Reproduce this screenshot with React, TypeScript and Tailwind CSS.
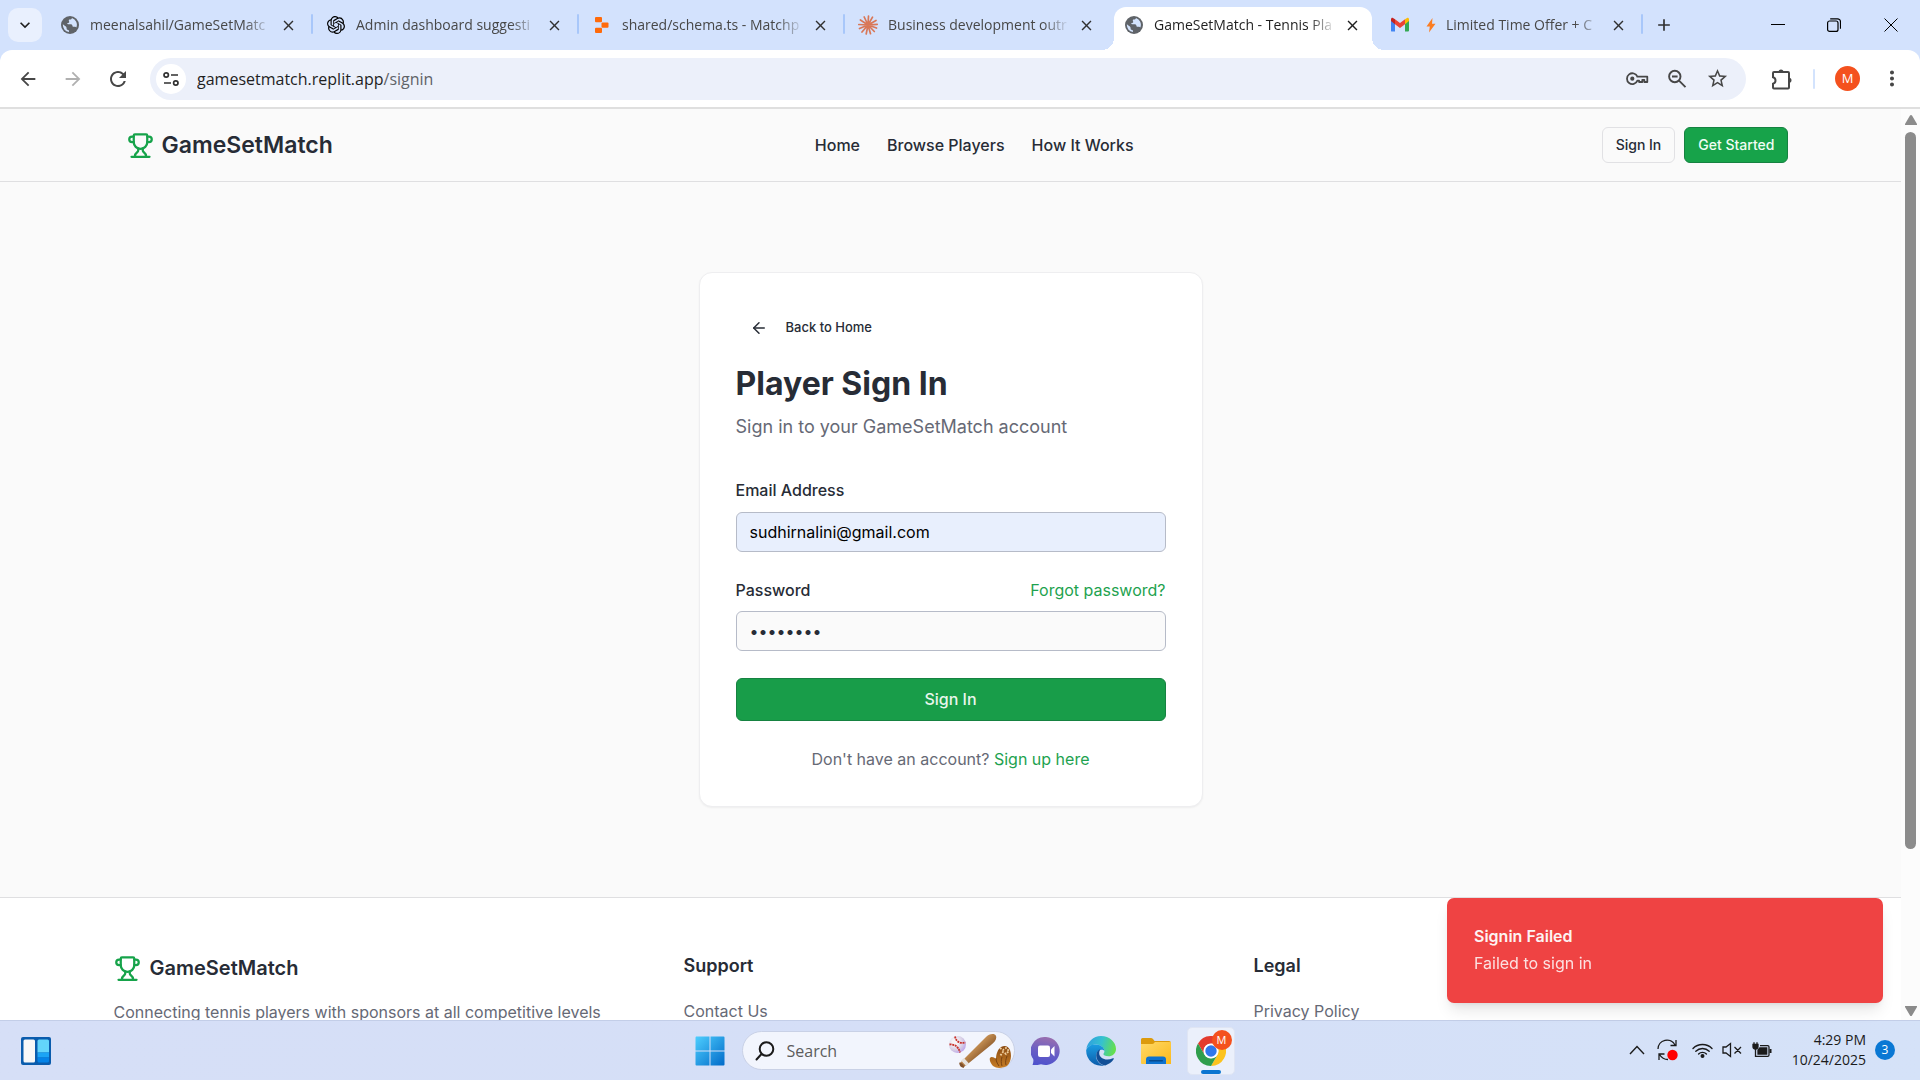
import { useState, type ReactNode } from "react";
import { ArrowLeft, Trophy } from "lucide-react";
import { SiOpenai } from "react-icons/si";
import {
  MdArrowBack,
  MdArrowForward,
  MdClose,
  MdAdd,
  MdMoreVert,
  MdRefresh,
  MdStarOutline,
  MdKeyboardArrowDown,
} from "react-icons/md";

function GlobeIcon() {
  return (
    <svg viewBox="0 0 20 20" className="size-[18px]" aria-hidden="true">
      <circle cx="10" cy="10" r="10" fill="#5f6368" />
      <path
        d="M12.2 2.2c-.3 1.500-1.200 1.700-2.500 1.800-1.400.1-1.100 1.300-.7 2.100.5 1-.6 1.500-1.600 1.800-.9.3-.4 1.400.6 1.400h3.100c1.400 0 1.500 1.200 1.700 2 .3.900 1.500.7 2.300.6.900 0 1.700.2 2 .8A8 8 0 0 0 12.200 2.200zM2.100 9.200a8 8 0 0 0 6.700 8.700c.2-1.100.3-2.200-.8-2.400-1.500-.2-1.800-1-1.800-2.300 0-1.200-.9-1.400-1.700-2z"
        fill="#d3e3fd"
      />
    </svg>
  );
}

function ReplitIcon() {
  return (
    <svg viewBox="0 0 20 20" className="size-5" fill="#ff6a0a" aria-hidden="true">
      <rect x="3" y="2" width="7" height="5.300" rx="1" />
      <rect x="9.500" y="7.400" width="7" height="5.300" rx="1" />
      <rect x="3" y="12.800" width="7" height="5.300" rx="1" />
    </svg>
  );
}

function ClaudeIcon() {
  return (
    <svg viewBox="-10 -10 20 20" className="size-5" stroke="#d97757" strokeWidth="1.700" strokeLinecap="round" aria-hidden="true">
      <path d="M0 0 0.500-9M0 0 4.500-7.800M0 0 8-4.500M0 0 9.200-.6M0 0 8.500 3M0 0 6.300 6.500M0 0 2.500 8.700M0 0-1.800 9M0 0-6 7M0 0-8.500 3.500M0 0-9.200-.5M0 0-7.600-5M0 0-3.800-8" />
    </svg>
  );
}

function GmailIcon() {
  return (
    <svg viewBox="0 0 20 16" className="h-4 w-5" aria-hidden="true">
      <path d="M1 14V3l4 3v8.500H2A1 1 0 0 1 1 14z" fill="#4285f4" />
      <path d="M15 6l4-3v10.500a1 1 0 0 1-1 1h-3z" fill="#34a853" />
      <path d="M15 2.300 17 1c1-.6 2 .2 2 1.300V4l-4 3.200z" fill="#fbbc04" />
      <path d="M5 7.200v-5l5 3.900 5-3.900v5l-5 3.900z" fill="#ea4335" />
      <path d="M1 4V2.300C1 1.200 2 .4 3 1l2 1.300v4.900z" fill="#c5221f" />
    </svg>
  );
}

type Tab = { id: string; title: ReactNode; label: string; icon: ReactNode; active?: boolean };

const tabs: Tab[] = [
  { id: "a", label: "meenalsahil/GameSetMatch", title: "meenalsahil/GameSetMatc", icon: <GlobeIcon /> },
  { id: "b", label: "Admin dashboard suggestions", title: "Admin dashboard suggesti", icon: <SiOpenai className="size-[18px] text-black" /> },
  { id: "c", label: "shared/schema.ts", title: "shared/schema.ts - Matchp", icon: <ReplitIcon /> },
  { id: "d", label: "Business development outreach", title: "Business development outr", icon: <ClaudeIcon /> },
  { id: "e", label: "GameSetMatch", title: "GameSetMatch - Tennis Pla", icon: <GlobeIcon />, active: true },
  {
    id: "f",
    label: "Limited Time Offer",
    title: (
      <span className="flex items-center gap-[10px] pl-[6px]">
        <svg viewBox="0 0 10 16" className="h-4 w-[10px] shrink-0" aria-hidden="true">
          <path d="M6.500 1 .5 9.500h3.300L3 15.500l6.500-8.800H6z" fill="#fb7d23" />
        </svg>
        Limited Time Offer + C
      </span>
    ),
    icon: <GmailIcon />,
  },
];

function BrowserTab({ tab, divider }: { tab: Tab; divider: boolean }) {
  return (
    <div
      className={
        tab.active
          ? "relative mt-[7px] mr-2 flex h-[43px] w-[258px] min-w-0 items-center rounded-t-[12px] bg-white pb-[7px] text-[#1f1f1f] before:absolute before:bottom-0 before:-left-3 before:size-3 before:bg-[radial-gradient(circle_at_0_0,transparent_12px,white_12px)] after:absolute after:-right-3 after:bottom-0 after:size-3 after:bg-[radial-gradient(circle_at_100%_0,transparent_12px,white_12px)]"
          : "relative flex h-[50px] w-[266px] min-w-0 items-center text-[#474747]"
      }
    >
      <span className="flex w-10 shrink-0 justify-center">{tab.icon}</span>
      <span className="min-w-0 flex-1 mask-r-from-85% text-sm whitespace-nowrap">{tab.title}</span>
      <button
        type="button"
        aria-label={"Close " + tab.label}
        className={tab.active ? "mr-2 ml-1 flex size-6 shrink-0 items-center justify-center text-[#1f1f1f]" : "mr-4 ml-1 flex size-6 shrink-0 items-center justify-center text-[#303030]"}
      >
        <MdClose className="size-[17px]" />
      </button>
      {divider && <span className="absolute top-[14px] right-[3px] h-5 w-[2px] rounded-full bg-[#a8c7fa]" />}
    </div>
  );
}

function KeyIcon() {
  return (
    <svg viewBox="0 0 24 24" className="size-6" fill="none" stroke="currentColor" strokeWidth="1.800" aria-hidden="true">
      <path d="M12.300 9.700h10v5.300h-3v-2.200h-2V15h-3.200v-1.300h-1.700a5.400 5.400 0 1 1 0-4z" strokeLinejoin="round" />
      <circle cx="7.300" cy="11.700" r="2.100" fill="currentColor" stroke="none" />
    </svg>
  );
}

function ZoomIcon() {
  return (
    <svg viewBox="0 0 24 24" className="size-6" fill="none" stroke="currentColor" strokeWidth="1.900" aria-hidden="true">
      <circle cx="9.800" cy="9.500" r="5.700" />
      <path d="m14 13.700 6.500 6.500M7 9.500h5.600" />
    </svg>
  );
}

function ExtensionIcon() {
  return (
    <svg viewBox="0 0 24 24" className="size-6" aria-hidden="true">
      <path
        d="M5 5h14a1 1 0 0 1 1 1v14.500a1 1 0 0 1-1 1H5a1 1 0 0 1-1-1v-3.800a3.300 3.300 0 0 0 0-6.400V6a1 1 0 0 1 1-1z"
        fill="none"
        stroke="currentColor"
        strokeWidth="2"
      />
      <path d="M9.500 5a2.500 2.500 0 0 1 5 0zM20 10.800a2.500 2.500 0 0 1 0 5z" fill="currentColor" />
    </svg>
  );
}

function BrowserChrome() {
  return (
    <div className="font-['Open_Sans',sans-serif]">
      <div className="flex h-[50px] items-center bg-[#d3e2fd]">
        <button type="button" aria-label="Search tabs" className="ml-2 flex h-[34px] w-[34px] shrink-0 items-center justify-center rounded-[10px] bg-[#e9f0fe]">
          <MdKeyboardArrowDown className="size-5 text-[#1f1f1f]" />
        </button>
        <div className="ml-2 flex min-w-0 items-center">
          {tabs.map((t, i) => (
            <BrowserTab key={t.id} tab={t} divider={i !== 3 && i !== 4} />
          ))}
        </div>
        <button type="button" aria-label="New tab" className="ml-[2px] flex size-8 shrink-0 items-center justify-center text-[#303030]">
          <MdAdd className="size-5" />
        </button>
        <div className="ml-auto flex h-full shrink-0 items-center text-black">
          <button type="button" aria-label="Minimize" className="flex h-full w-14 items-center justify-center">
            <svg viewBox="0 0 14 14" className="size-[14px]" stroke="currentColor" aria-hidden="true"><path d="M0 6.500h14" /></svg>
          </button>
          <button type="button" aria-label="Restore" className="flex h-full w-14 items-center justify-center">
            <svg viewBox="0 0 14 14" className="size-[14px]" fill="none" stroke="currentColor" strokeWidth="1.200" aria-hidden="true">
              <rect x=".6" y="3" width="10.400" height="10.400" rx="2" />
              <path d="M3.200.8h7.300a3 3 0 0 1 3 3v7" />
            </svg>
          </button>
          <button type="button" aria-label="Close" className="flex h-full w-[58px] items-center justify-center">
            <svg viewBox="0 0 14 14" className="size-[14px]" stroke="currentColor" aria-hidden="true"><path d="m.5.5 13 13M13.500.5l-13 13" /></svg>
          </button>
        </div>
      </div>
      <div className="bg-[#d3e2fd]">
        <div className="flex h-[57px] items-center rounded-t-[12px] bg-white text-[#474747]">
          <div className="ml-[5px] flex shrink-0">
            <button type="button" aria-label="Back" className="flex h-10 w-[45px] items-center justify-center"><MdArrowBack className="size-[22px]" /></button>
            <button type="button" aria-label="Forward" className="flex h-10 w-[45px] items-center justify-center text-[#b0b0b0]"><MdArrowForward className="size-[22px]" /></button>
            <button type="button" aria-label="Reload" className="flex h-10 w-[45px] items-center justify-center"><MdRefresh className="size-[24px]" /></button>
          </div>
          <div className="ml-[10px] flex h-[42px] min-w-0 flex-1 items-center rounded-full bg-[#ecf0fa] pl-[6px]">
            <button type="button" aria-label="Site information" className="flex size-[30px] shrink-0 items-center justify-center rounded-full bg-white">
              <svg viewBox="0 0 16 16" className="size-4" fill="none" stroke="#303030" strokeWidth="1.700" aria-hidden="true">
                <circle cx="3.200" cy="4" r="2.200" />
                <path d="M8 4h7M1 12h7" />
                <circle cx="12.800" cy="12" r="2.200" />
              </svg>
            </button>
            <a href="#signin" className="ml-[11px] flex-1 truncate text-base text-[#1f1f1f]">
              gamesetmatch.replit.app<span className="text-[#5f6368]">/signin</span>
            </a>
            <div className="flex shrink-0 pr-[9px]">
              <button type="button" aria-label="Manage passwords" className="flex w-10 items-center justify-center"><KeyIcon /></button>
              <button type="button" aria-label="Zoom" className="flex w-10 items-center justify-center"><ZoomIcon /></button>
              <button type="button" aria-label="Bookmark this tab" className="flex w-10 items-center justify-center"><MdStarOutline className="size-[23px]" /></button>
            </div>
          </div>
          <button type="button" aria-label="Extensions" className="ml-[15px] flex size-10 shrink-0 items-center justify-center"><ExtensionIcon /></button>
          <span className="ml-3 h-5 w-[2px] shrink-0 rounded-full bg-[#d3e3fd]" />
          <button type="button" aria-label="Profile" className="ml-5 flex size-[25px] shrink-0 items-center justify-center rounded-full bg-[#f4511e] text-[13px] text-white">M</button>
          <button type="button" aria-label="Browser menu" className="mr-4 ml-5 flex w-[24px] shrink-0 items-center justify-center"><MdMoreVert className="size-[25px]" /></button>
        </div>
      </div>
    </div>
  );
}

function SiteHeader() {
  return (
    <header className="border-b border-[#dfdfe1]">
      <div className="mx-auto flex h-[72px] max-w-[1728px] items-center justify-between px-[26px]">
        <a href="#home" className="flex items-center gap-2 px-[14px]">
          <Trophy className="size-[27px] text-[#16a34a]" />
          <span className="text-[23px] leading-8 font-semibold">GameSetMatch</span>
        </a>
        <nav className="flex gap-[27px] text-base font-medium">
          <a href="#home">Home</a>
          <a href="#players">Browse Players</a>
          <a href="#how">How It Works</a>
        </nav>
        <div className="flex gap-[9px] text-sm font-medium">
          <button type="button" className="h-9 rounded-md border border-[#e1e1e4] px-[13px]">Sign In</button>
          <button type="button" className="h-9 rounded-md border border-[#168241] bg-[#17a34a] px-[13px] text-[#f0fdf4]">Get Started</button>
        </div>
      </div>
    </header>
  );
}

function SignInCard() {
  const [email, setEmail] = useState("sudhirnalini@gmail.com");
  const [password, setPassword] = useState("password");
  return (
    <form onSubmit={(e) => e.preventDefault()} className="w-full max-w-[504px] rounded-[13px] border border-[#eeeef0] bg-white px-9 pt-[37px] pb-[35px] shadow-xs">
      <button type="button" className="flex h-9 items-center gap-[18px] px-[14px] text-[13px] font-medium">
        <ArrowLeft className="size-[18px]" />
        Back to Home
      </button>
      <h1 className="mt-[18px] text-[32px] leading-10 font-bold">Player Sign In</h1>
      <p className="mt-[9px] text-lg leading-7 text-[#666975]">Sign in to your GameSetMatch account</p>
      <div className="mt-[38px]">
        <label htmlFor="email" className="block text-base leading-[22px] font-medium">Email Address</label>
        <input id="email" type="email" value={email} onChange={(e) => setEmail(e.target.value)} className="mt-[11px] h-10 w-full rounded-md border border-[#b6bbc8] bg-[#e8effd] px-[13px] text-base text-black" />
      </div>
      <div className="mt-[27px]">
        <div className="flex items-center justify-between text-base leading-[22px]">
          <label htmlFor="password" className="font-medium">Password</label>
          <a href="#forgot" className="text-[#1ea24f]">Forgot password?</a>
        </div>
        <input id="password" type="password" value={password} onChange={(e) => setPassword(e.target.value)} className="mt-[10px] h-10 w-full rounded-md border border-[#b6bbc8] bg-[#fafafa] px-[13px] text-base" />
      </div>
      <button type="submit" className="mt-[27px] h-[43px] w-full rounded-md border border-[#168241] bg-[#189d49] pb-[2px] text-base font-medium text-[#e8f6ec]">Sign In</button>
      <p className="mt-[26px] text-center text-base leading-6 text-[#666975]">
        Don't have an account? <a href="#signup" className="text-[#1ea24f]">Sign up here</a>
      </p>
    </form>
  );
}

function SiteFooter() {
  return (
    <footer className="border-t border-[#dfdfe1] bg-white">
      <div className="mx-auto grid max-w-[1728px] grid-cols-3 gap-9 px-[27px] py-[54px]">
        <div>
          <div className="flex items-center gap-[9px]">
            <Trophy className="size-[27px] text-[#16a34a]" />
            <span className="text-xl leading-8 font-semibold">GameSetMatch</span>
          </div>
          <p className="mt-4 text-base text-[#666975]">Connecting tennis players with sponsors at all competitive levels</p>
        </div>
        <div>
          <h2 className="text-lg leading-7 font-semibold">Support</h2>
          <a href="#contact" className="mt-[19px] block text-base text-[#666975]">Contact Us</a>
        </div>
        <div>
          <h2 className="text-lg leading-7 font-semibold">Legal</h2>
          <a href="#privacy" className="mt-[19px] block text-base text-[#666975]">Privacy Policy</a>
        </div>
      </div>
    </footer>
  );
}

function Scrollbar() {
  return (
    <div className="flex w-[19px] shrink-0 flex-col items-center bg-[#fcfcfc] pt-[6px] pb-1" aria-hidden="true">
      <svg viewBox="0 0 12 10" className="h-[10px] w-3" fill="#8b8b8b"><path d="M6 0c.5 0 .8.200 1 .6L12 9c.2.600-.1 1-.7 1H.7C.1 10-.2 9.600 0 9L5 .6C5.200.2 5.500 0 6 0z" /></svg>
      <div className="mt-[7px] mb-[157px] w-[11px] flex-1 rounded-full bg-[#8b8b8b]" />
      <svg viewBox="0 0 12 10" className="h-[10px] w-3 rotate-180" fill="#8b8b8b"><path d="M6 0c.5 0 .8.200 1 .6L12 9c.2.600-.1 1-.7 1H.7C.1 10-.2 9.600 0 9L5 .6C5.200.2 5.500 0 6 0z" /></svg>
    </div>
  );
}

function Baseball() {
  return (
    <svg viewBox="0 0 64 34" className="h-[34px] w-16 shrink-0" aria-hidden="true">
      <defs>
        <linearGradient id="bat" x1="0" y1="0" x2="1" y2="1">
          <stop offset=".35" stopColor="#d09a5b" />
          <stop offset=".65" stopColor="#8d5a2b" />
        </linearGradient>
        <radialGradient id="ball" cx=".35" cy=".35" r=".8">
          <stop offset=".2" stopColor="#f6f3f6" />
          <stop offset=".6" stopColor="#d5cce4" />
          <stop offset="1" stopColor="#b192ee" />
        </radialGradient>
        <linearGradient id="glove" x1="0" y1="0" x2="0" y2="1">
          <stop offset="0" stopColor="#8a4a12" />
          <stop offset="1" stopColor="#c67d26" />
        </linearGradient>
      </defs>
      <circle cx="9.500" cy="10.500" r="8.500" fill="url(#ball)" />
      <path d="M7 2.500c1 5 5 7.500 10.500 6M1.500 10.500c5-.5 9 2 10.500 8" stroke="#c8322b" strokeWidth="1.800" strokeDasharray="2 .7" fill="none" />
      <path d="M12 29 38 3c3-3.500 9-4 10-1s-1 6-5 9L16 33c-2 1-5-2-4-4z" fill="url(#bat)" />
      <path d="m16 24 5 5.500-3 2.500-5-5.500z" fill="#e7e2dc" />
      <path d="M11.500 28.500c2 0 4.500 2.500 4.500 5-2 1-5.500-2-4.500-5z" fill="#80502a" />
      <path d="M42 24c1-2 4-1 6 1 0-5 2-10 5-12 4-2 7-1 9 3 2 6 1 12-3 16-4 2-10 3-14 0-2-2-4-6-3-8z" fill="url(#glove)" />
      <path d="m52 14 3 2 3-2 3 3-3 3-3-2-3 4" fill="none" stroke="#f0d0a0" strokeWidth="1.800" strokeDasharray="1.800 1.300" />
      <path d="M48 24c0 3 1 5 3 8M54 23c-1 3-1 6 0 9M59 22c-1 3-2 6-1 9" stroke="#7a4312" fill="none" />
    </svg>
  );
}

function StartIcon() {
  return (
    <svg viewBox="0 0 30 30" className="size-[30px]" aria-hidden="true">
      <defs>
        <linearGradient id="win" gradientUnits="userSpaceOnUse" x1="0" y1="0" x2="30" y2="30">
          <stop offset="0" stopColor="#4fd0ff" />
          <stop offset="1" stopColor="#0069c8" />
        </linearGradient>
      </defs>
      <path d="M1 .5h13.500v14H.5V1.500zM15.500.5h13q1 0 1 1v13h-14zM.5 15.500h14v14h-13q-1 0-1-1zM15.500 15.500h14v13q0 1-1 1h-13z" fill="url(#win)" />
    </svg>
  );
}

function ChatIcon() {
  return (
    <svg viewBox="0 0 30 30" className="size-[30px]" aria-hidden="true">
      <defs>
        <linearGradient id="chat" x1=".6" y1="0" x2=".4" y2="1">
          <stop offset="0" stopColor="#9b6fae" />
          <stop offset=".5" stopColor="#6b5fc4" />
          <stop offset="1" stopColor="#4f52cc" />
        </linearGradient>
      </defs>
      <path d="M15 1a14 14 0 1 1-5 27.200c-3 .8-6 1-8.500.8.8-2 1.200-4 .7-6A14 14 0 0 1 15 1z" fill="url(#chat)" />
      <rect x="7" y="9.500" width="12" height="11.500" rx="2" fill="#fff" />
      <path d="M20 13.500 23.500 10v10.500L20 17z" fill="#fff" />
    </svg>
  );
}

function EdgeIcon() {
  return (
    <svg viewBox="0 0 30 30" className="size-[30px]" aria-hidden="true">
      <defs>
        <linearGradient id="edgeTop" x1="0" y1=".3" x2="1" y2=".5">
          <stop offset="0" stopColor="#2f9fe0" />
          <stop offset=".5" stopColor="#35c1d0" />
          <stop offset="1" stopColor="#66e04a" />
        </linearGradient>
        <linearGradient id="edgeLeft" x1="0" y1="0" x2="0" y2="1">
          <stop offset="0" stopColor="#1b9de2" />
          <stop offset="1" stopColor="#0c5cab" />
        </linearGradient>
      </defs>
      <path d="M.3 13.500C1.200 6 7.300 0 15 0c8.500 0 15 6.200 15 13 0 4.500-3.500 7.300-7.500 7.300-3.300 0-5.300-1.200-5.100-2.300.2-.7 1-1.200 1-3C18.400 11.500 14.500 8.500 10 8.500S1 11 .3 13.500z" fill="url(#edgeTop)" />
      <path d="M.2 14C1.500 10.500 5 8.500 9.500 8.500c5 0 9 3 8.900 6.500C17 12.800 11 13.500 10.200 19c-.5 4.500 2.500 9.500 8.300 10.400A15 15 0 0 1 .2 14z" fill="url(#edgeLeft)" />
      <path d="M14.500 13.200c-2.500.8-4.300 3-4.300 6 0 5.300 4.300 9.800 9 10.200 3.600-.9 6.700-3.200 8.600-6.300.3-.7-.3-1.100-.9-.8-6.500 3-13.700.4-13.700-5.300 0-1.500.5-2.800 1.300-3.800z" fill="#124f97" />
    </svg>
  );
}

function FolderIcon() {
  return (
    <svg viewBox="0 0 30 30" className="size-[30px]" aria-hidden="true">
      <defs>
        <linearGradient id="folder" x1="0" y1="0" x2="1" y2="1">
          <stop offset="0" stopColor="#ffd968" />
          <stop offset="1" stopColor="#fbb91b" />
        </linearGradient>
      </defs>
      <path d="M0 3.500Q0 2 1.500 2h8.500q1 0 2 1l1.500 2H28q2 0 2 2v5H0z" fill="#dc9a0c" />
      <path d="M0 8h11q1.500 0 2.500-1.500L14 6h16v22H1q-1 0-1-1z" fill="url(#folder)" />
      <path d="M5 28v-4.500Q5 20.500 8 20.500h14q3 0 3 3V28z" fill="#0d72cf" />
      <rect x="8" y="24" width="14" height="1.500" rx=".7" fill="#064b8e" />
    </svg>
  );
}

function ChromeIcon() {
  return (
    <svg viewBox="0 0 30 30" className="size-[30px]" aria-hidden="true">
      <path d="M2 7.500A15 15 0 0 1 28 7.500H15a7.500 7.500 0 0 0-6.500 11.200z" fill="#e33b2e" />
      <path d="M28 7.500A15 15 0 0 1 15 30l6.500-11.200A7.500 7.500 0 0 0 15 7.500z" fill="#fcc31e" />
      <path d="M2 7.500 8.500 18.700A7.500 7.500 0 0 0 21.500 18.700L15 30A15 15 0 0 1 2 7.500z" fill="#2f9e4c" />
      <circle cx="15" cy="15" r="7.300" fill="#fff" />
      <circle cx="15" cy="15" r="5.700" fill="#2f77ea" />
    </svg>
  );
}

function Taskbar() {
  return (
    <div className="grid h-[60px] shrink-0 grid-cols-[1fr_auto_1fr] items-center border-t border-[#c3cee8] bg-linear-to-r from-[#d6dff7] via-[#d5dff7] to-[#d5e2f8] font-['Open_Sans',sans-serif]">
      <button type="button" aria-label="Widgets" className="ml-[21px] w-[30px]">
        <svg viewBox="0 0 30 28" className="h-7 w-[30px]" aria-hidden="true">
          <rect width="30" height="28" rx="2" fill="#0a5cad" />
          <rect x="2.500" y="2.500" width="11.500" height="23" rx="1.500" fill="#f7f7f7" />
          <path d="M16.500 4q0-1.500 1.500-1.500h8.500q1.500 0 1.500 1.500v11.500H16.500z" fill="#63d5fb" />
          <path d="M16.500 15.500H28v5H16.500z" fill="#1ba4f5" />
          <path d="M16.500 20.500H28V24q0 1.500-1.500 1.500H18q-1.500 0-1.500-1.500z" fill="#0483e8" />
        </svg>
      </button>
      <div className="flex items-center pl-[9px]">
        <button type="button" aria-label="Start"><StartIcon /></button>
        <label className="ml-[17px] flex h-[39px] w-[273px] items-center rounded-full border border-[#c9d1e6] bg-[#f2f5fd] pr-[2px] pl-3">
          <svg viewBox="0 0 20 20" className="size-5 shrink-0" fill="none" stroke="#1b1b1b" strokeWidth="2" strokeLinecap="round" aria-hidden="true">
            <circle cx="11.500" cy="8" r="6.800" />
            <path d="M6.500 13 1.500 18.500" />
          </svg>
          <input type="text" aria-label="Search" placeholder="Search" className="ml-3 w-0 flex-1 text-base text-[#5c5c5c] placeholder:text-[#5c5c5c]" />
          <Baseball />
        </label>
        <button type="button" aria-label="Chat" className="ml-[16px]"><ChatIcon /></button>
        <button type="button" aria-label="Edge" className="ml-[25px]"><EdgeIcon /></button>
        <button type="button" aria-label="File Explorer" className="ml-[25px]"><FolderIcon /></button>
        <button type="button" aria-label="Chrome" className="relative ml-4 flex size-12 items-center justify-center rounded-[5px] border border-[#dfe5f4] bg-[#ebf0fb]">
          <ChromeIcon />
          <span className="absolute top-[2px] right-[2px] flex size-5 items-center justify-center rounded-full bg-[#f4511e] text-[11px] leading-none text-white">M</span>
          <span className="absolute bottom-0 h-1 w-5 rounded-full bg-[#0a75d1]" />
        </button>
      </div>
      <div className="flex items-center justify-end pr-[25px] pb-[2px] text-[#1b1b1b]">
        <svg viewBox="0 0 16 10" className="h-[10px] w-4" fill="none" stroke="currentColor" strokeWidth="1.400" aria-hidden="true"><path d="m1 9 7-7.500L15 9" /></svg>
        <svg viewBox="0 0 21 22" className="ml-3 h-[22px] w-[21px]" fill="none" stroke="currentColor" strokeWidth="1.300" aria-hidden="true">
          <path d="M1 10A9 9 0 0 1 18 6M19 1v5.500h-5.500M11 20.500c-3.500 0-6.500-1.700-8.500-5M2 21v-6h5.500" />
          <circle cx="15.500" cy="16" r="5.200" fill="#f00" stroke="none" />
        </svg>
        <svg viewBox="0 0 21 16" className="ml-[14px] h-4 w-[21px]" fill="none" stroke="currentColor" strokeWidth="1.400" strokeLinecap="round" aria-hidden="true">
          <path d="M1 6.500a13.400 13.400 0 0 1 19 0M3.800 9.300a9.500 9.500 0 0 1 13.400 0M6.600 12a5.500 5.500 0 0 1 7.800 0" />
          <circle cx="10.500" cy="14" r="1.300" fill="currentColor" />
        </svg>
        <svg viewBox="0 0 20 16" className="ml-[9px] h-4 w-5" fill="none" stroke="currentColor" strokeWidth="1.300" aria-hidden="true">
          <path d="M1 5h3L8.500 1.500v13L4 11H1zM12.500 5l6.500 6.500M19 5l-6.500 6.500" />
        </svg>
        <svg viewBox="0 0 20 16" className="ml-[10px] h-4 w-5" fill="none" stroke="currentColor" strokeWidth="1.300" aria-hidden="true">
          <path d="M1 2.500h5v2a2.500 2.500 0 0 1-5 0zM2 .2v2.500M5 .2v2.500" fill="currentColor" />
          <path d="M3.500 6.500v7.800H15.700q1.300 0 1.300-1.300V5q0-1.300-1.300-1.300H8" />
          <path d="M7.800 6h6.900v6H6V8z" fill="currentColor" />
          <path d="M18.500 7v4" strokeWidth="2" />
        </svg>
        <div className="ml-[20px] text-right text-sm leading-5">
          <div>4:29 PM</div>
          <div>10/24/2025</div>
        </div>
        <span className="ml-[9px] flex size-5 items-center justify-center rounded-full bg-[#0a78d4] text-xs text-white">3</span>
      </div>
    </div>
  );
}

export default function App() {
  return (
    <div className="flex h-screen flex-col overflow-hidden">
      <BrowserChrome />
      <div className="relative flex min-h-0 flex-1 border-t-2 border-[#dfdfdf] bg-[#fafafa] font-['Inter',sans-serif] text-[#272c36]">
        <div className="min-w-0 flex-1 overflow-hidden">
          <SiteHeader />
          <main className="flex justify-center py-[90px]">
            <SignInCard />
          </main>
          <SiteFooter />
        </div>
        <Scrollbar />
        <div role="alert" className="absolute right-[37px] bottom-[17px] h-[105px] w-[436px] rounded-[7px] bg-[#ef4343] px-[27px] pt-[26px] text-[#fdf3f3] shadow-lg">
          <div className="text-base leading-6 font-semibold">Signin Failed</div>
          <div className="mt-[3px] text-base leading-6 opacity-90">Failed to sign in</div>
        </div>
      </div>
      <Taskbar />
    </div>
  );
}
